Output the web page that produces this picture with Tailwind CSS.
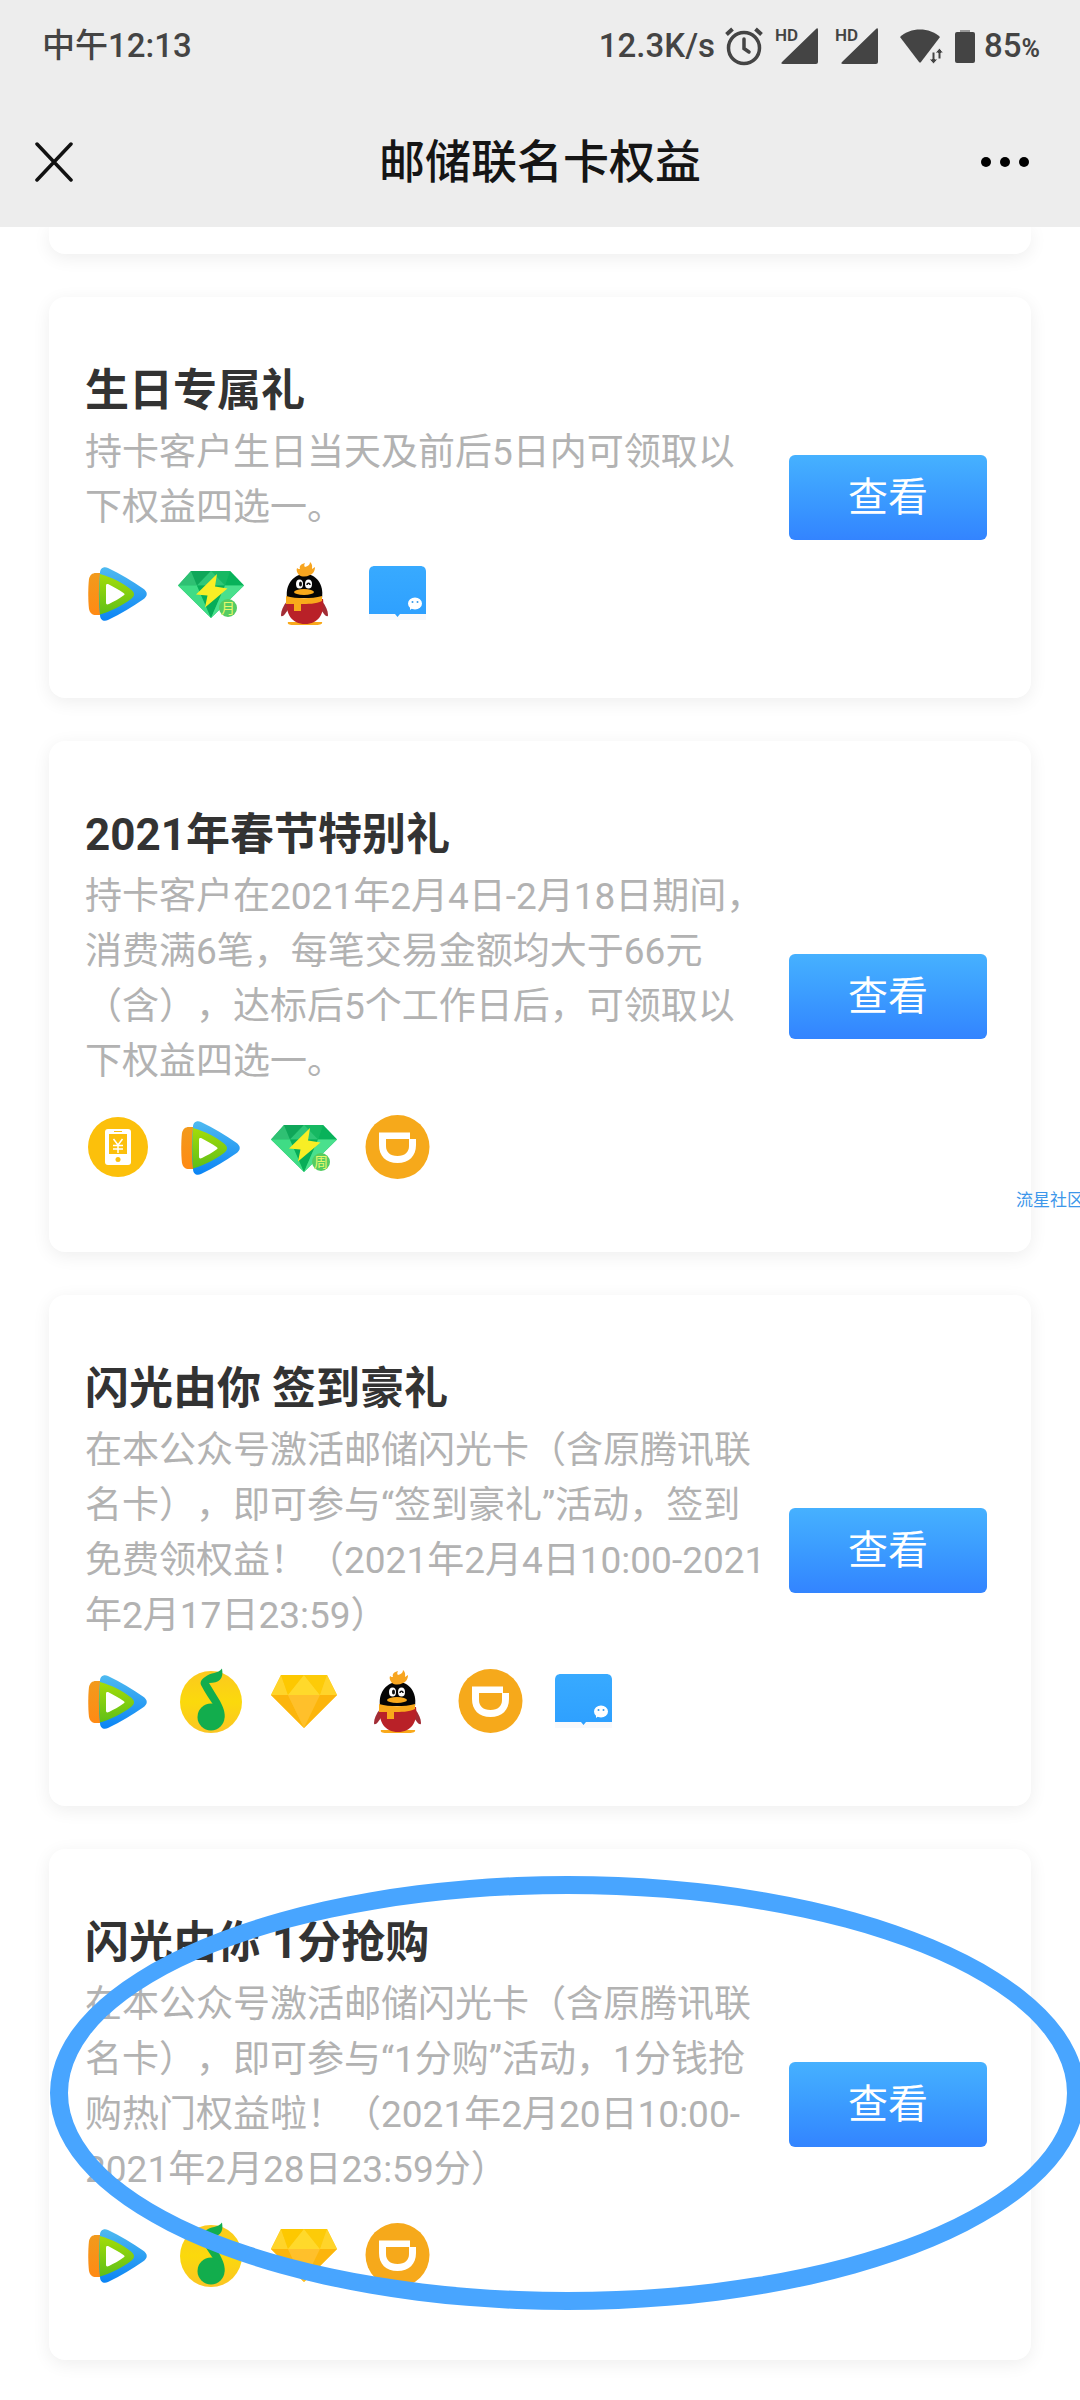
<!DOCTYPE html>
<html lang="zh-CN">
<head>
  <meta charset="UTF-8" />
  <meta name="viewport" content="width=device-width, initial-scale=1" />
  <title>邮储联名卡权益</title>
  <script src="https://cdn.jsdelivr.net/npm/@tailwindcss/browser@4"></script>
</head>
<body class="relative min-h-screen overflow-x-hidden bg-white font-[Roboto,'Noto_Sans_CJK_SC',sans-serif] [text-spacing-trim:space-all]">

  <!-- Icon sprites -->
  <svg class="absolute h-0 w-0" aria-hidden="true">
    <defs>
      <linearGradient id="g-blue" x1="0" y1="0" x2="0" y2="1"><stop offset="0" stop-color="#4fbaf0" /><stop offset="1" stop-color="#0a84f5" /></linearGradient>
      <linearGradient id="g-green" x1="0" y1="0" x2="0" y2="1"><stop offset="0" stop-color="#a4dc08" /><stop offset="1" stop-color="#5fbf18" /></linearGradient>
      <linearGradient id="g-orange" x1="0" y1="0" x2="0" y2="1"><stop offset="0" stop-color="#f29a1c" /><stop offset="1" stop-color="#ff8a14" /></linearGradient>
      <linearGradient id="g-music" x1="0" y1="0" x2="0" y2="1"><stop offset="0" stop-color="#fbc91f" /><stop offset=".5" stop-color="#fbd90c" /><stop offset="1" stop-color="#fbc524" /></linearGradient>
      <linearGradient id="g-bubble" x1="0" y1="0" x2="0" y2="1"><stop offset="0" stop-color="#38aaff" /><stop offset="1" stop-color="#2ea0ff" /></linearGradient>
    </defs>

    <symbol id="video" viewBox="0 0 66 66">
      <path d="M11 13h7v42h-7c-4 0-6-2-7-6-1-8-1-22 0-30 1-4 3-6 7-6z" fill="url(#g-orange)" />
      <path d="M15 13c0-5 4-7 8-5 13 6 24 13 35 20.500 5 3.500 5 7.500 0 11-11 7.500-22 14.500-35 20.500-4 2-8 0-8-5-1.500-14-1.500-28 0-42z" fill="url(#g-blue)" />
      <path d="M15 14c11 3 21 8 31 15.500 4 3.500 4 6 0 9.500-10 7.500-20 12-31 15.500-1-14-1-27 0-40.500z" fill="url(#g-green)" />
      <path d="M21 26c0-2 1-2.500 3-1.500 5 2.500 9.500 5 14.500 8.500 1.500 1 1.500 1.500 0 2.500-5 3.500-9.500 6-14.500 8.500-2 1-3 .5-3-1.500z" fill="#fff" />
    </symbol>

    <symbol id="green-diamond" viewBox="0 0 66 66">
      <path d="M13 11h39l14 14.500L33 58 0 25.500z" fill="#1fc267" />
      <path d="M13 11L0 25.500h19z" fill="#2fc073" />
      <path d="M13 11h20L19 25.500z" fill="#0fa659" />
      <path d="M33 11h19l-5 14.500z" fill="#16b862" />
      <path d="M33 11l14 14.500H19z" fill="#2fc777" />
      <path d="M52 11l14 14.500H47z" fill="#08b25a" />
      <path d="M0 25.500h19L33 58z" fill="#3fdc85" />
      <path d="M19 25.500h28L33 58z" fill="#07ad58" />
      <path d="M47 25.500h19L33 58z" fill="#4ae08d" />
      <path d="M39 14L18 34.500l11.500 1L27 47.500l22.500-19-12.500-2z" fill="#f8ee25" />
      <circle cx="50" cy="48" r="9" fill="#55cc62" />
    </symbol>

    <symbol id="penguin" viewBox="0 0 66 66">
      <path d="M17 62h34c1 2-2 3-6 3H22c-4 0-6-1-5-3z" fill="#f9a91b" />
      <path d="M16 41c-4 5-6 10-6 14 0 2 2 1.500 4-1l5-7z" fill="#a22c35" />
      <path d="M51 41c4 5 6 10 6 14 0 2-2 1.500-4-1l-5-7z" fill="#a22c35" />
      <path d="M16 39h36c2 15-5 25-18 25S14 54 16 39z" fill="#b92128" />
      <path d="M16 38c-2-14 7-24 18-24s19 10 17 24z" fill="#050505" />
      <path d="M28 15c-2-2-3-5-2-7 1 1 2 1 3 1-1-3 1-5 5-6-1 2-1 3 0 4 3-1 5-2 5-5 3 3 2 5 2 7l3-2c0 4-2 7-5 8-4 2-8 2-11 0z" fill="#f7a520" />
      <path d="M15 36c11 3 25 3 36 0v5c-6 3-14 3-22 3H15z" fill="#f9a91b" />
      <path d="M23 41h7v10h-7z" fill="#f9a91b" />
      <ellipse cx="28.500" cy="24" rx="3.500" ry="4.500" fill="#fff" />
      <ellipse cx="37.500" cy="24" rx="3.500" ry="4.500" fill="#fff" />
      <ellipse cx="29.500" cy="24" rx="1.500" ry="2.500" fill="#111" />
      <path d="M36 25c0-2.500 3-2.500 3 0" fill="none" stroke="#111" stroke-width="1.500" />
      <ellipse cx="33" cy="32" rx="10" ry="3" fill="#f9a91b" />
    </symbol>

    <symbol id="bubble" viewBox="0 0 66 66">
      <path d="M5 54h57v6H5z" fill="#f8f9fc" />
      <path d="M5 54V12c0-4 2-6 6-6h45c4 0 6 2 6 6v42H36l-2.500 3-2.500-3z" fill="url(#g-bubble)" />
      <path d="M46 46h5l-5 4z" fill="#fff" />
      <ellipse cx="51" cy="43.500" rx="7" ry="6" fill="#fff" />
      <circle cx="48.500" cy="42" r="1" fill="#3a9be8" />
      <circle cx="53.500" cy="42" r="1" fill="#3a9be8" />
    </symbol>

    <symbol id="phone" viewBox="0 0 66 66">
      <circle cx="33" cy="33" r="30" fill="#fcc00b" />
      <rect x="20" y="15" width="26" height="36" rx="3" fill="#fff" />
      <path d="M24 20h18v20H24z" fill="#fcc00b" />
      <path d="M29 17.500h8" stroke="#fcc00b" stroke-width="1" />
      <circle cx="33" cy="45.500" r="2.500" fill="#fcc00b" />
      <path d="M28.500 25l4.500 6 4.500-6M33 31v8M28 31.500h10M28 35h10" fill="none" stroke="#fff" stroke-width="1.500" />
    </symbol>

    <symbol id="ride" viewBox="0 0 66 66">
      <circle cx="33.500" cy="33" r="32" fill="#f6a91b" />
      <path d="M15 18.500h31v6.500h6v6c0 11-7 18-18.500 18S15 42 15 31zM22 25v7c0 6 4 10 11.500 10S45 38 45 32v-7z" fill="#fff" fill-rule="evenodd" />
    </symbol>

    <symbol id="music" viewBox="0 0 66 66">
      <circle cx="33" cy="34" r="31" fill="url(#g-music)" />
      <path d="M44 .5C40 6 33 4 27 9c-4 3-5 5-4 8 4 8 9 15 13 21 5 3 8 7 10 13 2-6-1-12-4-18L31 15c10 0 15-4 13-14.500z" fill="#12ad4d" />
      <circle cx="33" cy="49" r="13.500" fill="#12ad4d" />
    </symbol>

    <symbol id="gold-diamond" viewBox="0 0 66 66">
      <path d="M10 7h46l10 20-33 33L0 27z" fill="#ffc61a" />
      <path d="M10 7L0 27h17z" fill="#ffd42a" />
      <path d="M10 7h23L17 27z" fill="#fdc800" />
      <path d="M33 7l16 20H17z" fill="#ffd92b" />
      <path d="M33 7h23l-7 20z" fill="#fdcb08" />
      <path d="M56 7l10 20H49z" fill="#ffd42a" />
      <path d="M0 27h17l16 33z" fill="#fcb50c" />
      <path d="M17 27h32L33 60z" fill="#ffc02b" />
      <path d="M49 27h17L33 60z" fill="#fcb50c" />
    </symbol>
  </svg>

  <header class="relative z-10 bg-[#ededed]">
    <!-- Status bar -->
    <div class="flex h-[92px] items-center justify-between pr-10 pl-[42px] text-[33px] font-medium text-[#444]">
      <span>中午12:13</span>
      <div class="flex items-center">
        <span>12.3K/s</span>
        <svg class="ml-[9px] h-10 w-10" viewBox="0 0 40 40" fill="none" stroke="#444" aria-hidden="true">
          <circle cx="20" cy="22" r="15.500" stroke-width="3.500" />
          <path d="M20 13v9.500l5 3.500" stroke-width="3.500" stroke-linecap="round" />
          <path d="M2.500 8.500l6-5.500M37.500 8.500l-6-5.500" stroke-width="4" />
        </svg>
        <svg class="ml-[11px] h-10 w-[44px]" viewBox="0 0 44 40" fill="#444" aria-hidden="true">
          <path d="M43 4v32a2 2 0 0 1-2 2H8c-2 0-2-1-1-2L41 3c1-1 2-1 2 1z" />
          <text x="0" y="15" font-size="17" font-weight="600">HD</text>
        </svg>
        <svg class="ml-4 h-10 w-[44px]" viewBox="0 0 44 40" fill="#444" aria-hidden="true">
          <path d="M43 4v32a2 2 0 0 1-2 2H8c-2 0-2-1-1-2L41 3c1-1 2-1 2 1z" />
          <text x="0" y="15" font-size="17" font-weight="600">HD</text>
        </svg>
        <svg class="ml-5 h-10 w-[44px]" viewBox="0 0 44 40" fill="#444" aria-hidden="true">
          <path d="M1 11C11 1 31 1 41 11L22 36c-1 1-1 1-2 0z" />
          <path d="M33 26h3v7h3l-4.500 5-4.500-5h3zM39 33v-6h-3l4.500-5 4 5H42v6z" stroke="#ededed" stroke-width="1" />
        </svg>
        <svg class="ml-3 h-10 w-5" viewBox="0 0 20 40" fill="#444" aria-hidden="true">
          <path d="M5 4h10v4H5z" fill="#999" />
          <rect x="0" y="6" width="20" height="31" rx="2" />
        </svg>
        <span class="ml-[9px]">85<span class="text-[25px] font-bold">%</span></span>
      </div>
    </div>

    <!-- Navigation bar -->
    <nav class="flex h-[135px] items-center justify-between px-[34px] pt-1">
      <button type="button" aria-label="关闭" class="w-[82px]">
        <svg class="h-10 w-10" viewBox="0 0 40 40" fill="none" stroke="#111" stroke-width="3.500" stroke-linecap="round"><path d="M3 2l34 36M37 2L3 38" /></svg>
      </button>
      <h1 class="text-[46px] leading-[60px] font-medium text-[#151515]">邮储联名卡权益</h1>
      <button type="button" aria-label="更多" class="flex w-[82px] justify-center">
        <svg class="h-3 w-12" viewBox="0 0 48 12"><circle cx="5" cy="6" r="5" /><circle cx="24" cy="6" r="5" /><circle cx="43" cy="6" r="5" /></svg>
      </button>
    </nav>
  </header>

  <main class="flex flex-col gap-[43px] px-[49px] pb-[38px]">
    <div class="h-[27px] rounded-b-2xl bg-white shadow-[0_4px_18px_rgba(0,0,0,0.07)]"></div>

    <section class="flex items-center gap-[22px] rounded-2xl bg-white pr-[44px] pl-9 shadow-[0_4px_18px_rgba(0,0,0,0.07)]">
      <div class="flex-1 pt-[60px] pb-[72px]">
        <h2 class="text-[44px] leading-[68px] font-bold text-[#333]">生日专属礼</h2>
        <p class="text-[37px] leading-[55px] text-[#b2b2b2]">持卡客户生日当天及前后5日内可领取以下权益四选一。</p>
        <div class="mt-[25px] flex gap-[27px]">
          <svg class="size-[66px]"><use href="#video" /></svg>
          <svg class="size-[66px]"><use href="#green-diamond" /><text x="50" y="53" font-size="14" text-anchor="middle" fill="#e6f76a">月</text></svg>
          <svg class="size-[66px]"><use href="#penguin" /></svg>
          <svg class="size-[66px]"><use href="#bubble" /></svg>
        </div>
      </div>
      <button type="button" class="h-[85px] w-[198px] rounded-md bg-linear-to-b from-[#46b1ff] to-[#3384ff] text-[40px] text-white">查看</button>
    </section>

    <section class="flex items-center gap-[22px] rounded-2xl bg-white pr-[44px] pl-9 shadow-[0_4px_18px_rgba(0,0,0,0.07)]">
      <div class="flex-1 pt-[60px] pb-[72px]">
        <h2 class="text-[44px] leading-[68px] font-bold text-[#333]">2021年春节特别礼</h2>
        <p class="text-[37px] leading-[55px] text-[#b2b2b2]">持卡客户在2021年2月4日-2月18日期间，消费满6笔，每笔交易金额均大于66元（含），达标后5个工作日后，可领取以下权益四选一。</p>
        <div class="mt-[25px] flex gap-[27px]">
          <svg class="size-[66px]"><use href="#phone" /></svg>
          <svg class="size-[66px]"><use href="#video" /></svg>
          <svg class="size-[66px]"><use href="#green-diamond" /><text x="50" y="53" font-size="14" text-anchor="middle" fill="#e6f76a">周</text></svg>
          <svg class="size-[66px]"><use href="#ride" /></svg>
        </div>
      </div>
      <button type="button" class="h-[85px] w-[198px] rounded-md bg-linear-to-b from-[#46b1ff] to-[#3384ff] text-[40px] text-white">查看</button>
    </section>

    <section class="flex items-center gap-[22px] rounded-2xl bg-white pr-[44px] pl-9 shadow-[0_4px_18px_rgba(0,0,0,0.07)]">
      <div class="flex-1 pt-[60px] pb-[72px]">
        <h2 class="text-[44px] leading-[68px] font-bold text-[#333]">闪光由你 签到豪礼</h2>
        <p class="text-[37px] leading-[55px] text-[#b2b2b2]">在本公众号激活邮储闪光卡（含原腾讯联名卡），即可参与“签到豪礼”活动，签到免费领权益！（2021年2月4日10:00-2021年2月17日23:59）</p>
        <div class="mt-[25px] flex gap-[27px]">
          <svg class="size-[66px]"><use href="#video" /></svg>
          <svg class="size-[66px]"><use href="#music" /></svg>
          <svg class="size-[66px]"><use href="#gold-diamond" /></svg>
          <svg class="size-[66px]"><use href="#penguin" /></svg>
          <svg class="size-[66px]"><use href="#ride" /></svg>
          <svg class="size-[66px]"><use href="#bubble" /></svg>
        </div>
      </div>
      <button type="button" class="h-[85px] w-[198px] rounded-md bg-linear-to-b from-[#46b1ff] to-[#3384ff] text-[40px] text-white">查看</button>
    </section>

    <section class="relative flex items-center gap-[22px] rounded-2xl bg-white pr-[44px] pl-9 shadow-[0_4px_18px_rgba(0,0,0,0.07)]">
      <div class="flex-1 pt-[60px] pb-[72px]">
        <h2 class="text-[44px] leading-[68px] font-bold text-[#333]">闪光由你 1分抢购</h2>
        <p class="text-[37px] leading-[55px] text-[#b2b2b2]">在本公众号激活邮储闪光卡（含原腾讯联名卡），即可参与“1分购”活动，1分钱抢购热门权益啦！（2021年2月20日10:00-2021年2月28日23:59分）</p>
        <div class="mt-[25px] flex gap-[27px]">
          <svg class="size-[66px]"><use href="#video" /></svg>
          <svg class="size-[66px]"><use href="#music" /></svg>
          <svg class="size-[66px]"><use href="#gold-diamond" /></svg>
          <svg class="size-[66px]"><use href="#ride" /></svg>
        </div>
      </div>
      <button type="button" class="h-[85px] w-[198px] rounded-md bg-linear-to-b from-[#46b1ff] to-[#3384ff] text-[40px] text-white">查看</button>
      <!-- Highlight ring -->
      <div class="pointer-events-none absolute -right-[54px] top-[27px] bottom-[50px] left-px rounded-[50%] border-[18px] border-[#48a5ff]"></div>
    </section>
  </main>

  <!-- Watermark -->
  <span class="absolute top-[1188px] -right-1 text-[17px] leading-6 whitespace-nowrap text-[#3d97ea]">流星社区</span>
</body>
</html>
